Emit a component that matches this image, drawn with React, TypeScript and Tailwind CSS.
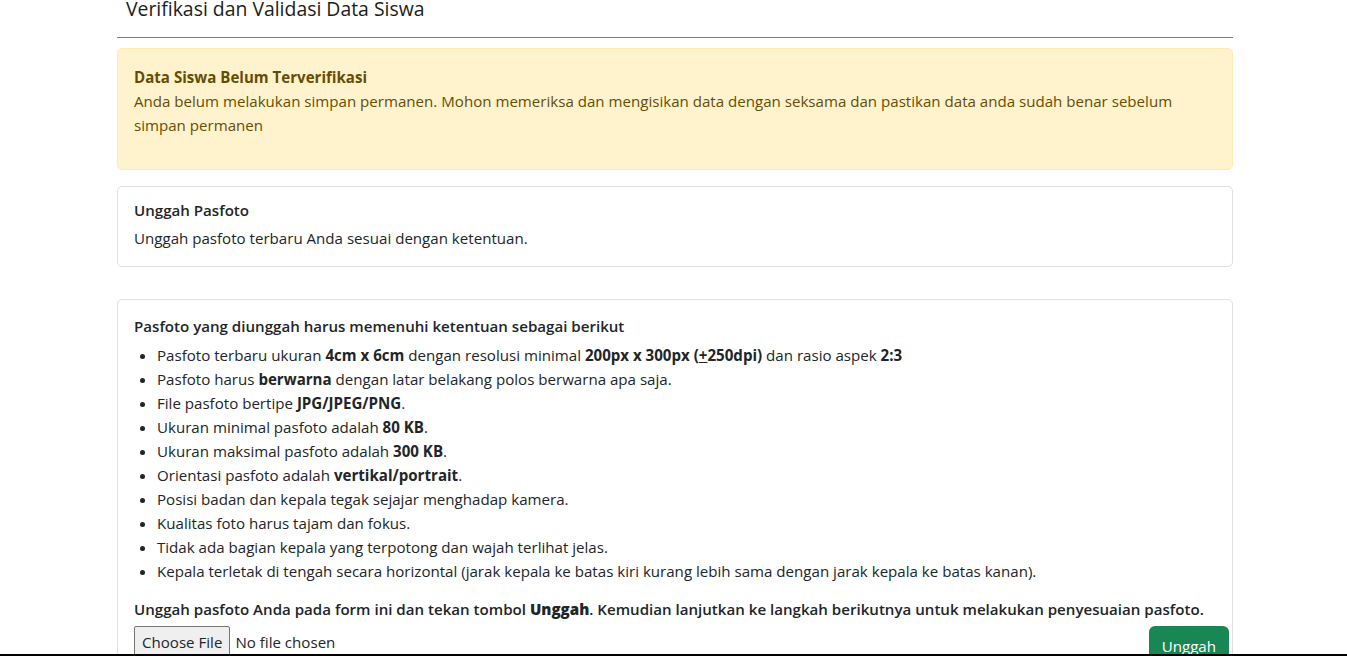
import React from "react";

const items: React.ReactNode[] = [
  <>Pasfoto terbaru ukuran <b>4cm x 6cm</b> dengan resolusi minimal <b>200px x 300px (<u>+</u>250dpi)</b> dan rasio aspek <b>2:3</b></>,
  <>Pasfoto harus <b>berwarna</b> dengan latar belakang polos berwarna apa saja.</>,
  <>File pasfoto bertipe <b>JPG/JPEG/PNG</b>.</>,
  <>Ukuran minimal pasfoto adalah <b>80 KB</b>.</>,
  <>Ukuran maksimal pasfoto adalah <b>300 KB</b>.</>,
  <>Orientasi pasfoto adalah <b>vertikal/portrait</b>.</>,
  <>Posisi badan dan kepala tegak sejajar menghadap kamera.</>,
  <>Kualitas foto harus tajam dan fokus.</>,
  <>Tidak ada bagian kepala yang terpotong dan wajah terlihat jelas.</>,
  <>Kepala terletak di tengah secara horizontal (jarak kepala ke batas kiri kurang lebih sama dengan jarak kepala ke batas kanan).</>,
];

export default function App() {
  return (
    <div className="relative h-[656px] overflow-hidden bg-white text-[#212529] font-['Open_Sans',sans-serif] text-[15.1px] leading-[24px]">
      <div className="mx-[117px] w-[1116px]">
        <h5 className="pl-[9px] text-[19.4px] leading-[20px] font-medium -mt-[1px] h-[38px] text-[#1a1d20]">Verifikasi dan Validasi Data Siswa</h5>
        <div className="h-px bg-[#808080]" />
        <div className="mt-[10px] h-[122px] rounded-[5px] border border-[#ffecb5] bg-[#fff3cd] px-[16px] pt-[16px] text-[#664d03]">
          <div className="font-bold">Data Siswa Belum Terverifikasi</div>
          <p>Anda belum melakukan simpan permanen. Mohon memeriksa dan mengisikan data dengan seksama dan pastikan data anda sudah benar sebelum simpan permanen</p>
        </div>
        <div className="mt-[16px] h-[81px] rounded-[5px] border border-[#dfdfdf] px-[16px] pt-[11px]">
          <div className="font-semibold">Unggah Pasfoto</div>
          <p className="mt-[4px]">Unggah pasfoto terbaru Anda sesuai dengan ketentuan.</p>
        </div>
        <div className="mt-[32px] h-[400px] rounded-[5px] border border-[#dfdfdf] px-[16px] pt-[14px]">
          <div className="font-semibold">Pasfoto yang diunggah harus memenuhi ketentuan sebagai berikut</div>
          <ul className="mt-[5px] list-disc pl-[23px]">
            {items.map((it, i) => (
              <li key={i}>{it}</li>
            ))}
          </ul>
          <p className="mt-[14px] font-semibold">Unggah pasfoto Anda pada form ini dan tekan tombol <b>Unggah</b>. Kemudian lanjutkan ke langkah berikutnya untuk melakukan penyesuaian pasfoto.</p>
          <div className="mt-[5px] flex items-start justify-between">
            <div className="flex items-center">
              <div className="h-[32px] rounded-[2px] border border-[#767676] bg-[#efefef] px-[7px] leading-[30px]">Choose File</div>
              <span className="ml-[5px]">No file chosen</span>
            </div>
            <div className="mr-[-13px] h-[38px] rounded-[6px] bg-[#198754] px-[13px] pt-[8px] text-white">Unggah</div>
          </div>
        </div>
      </div>
      <div className="absolute bottom-0 left-0 h-[2px] w-full bg-black" />
    </div>
  );
}
